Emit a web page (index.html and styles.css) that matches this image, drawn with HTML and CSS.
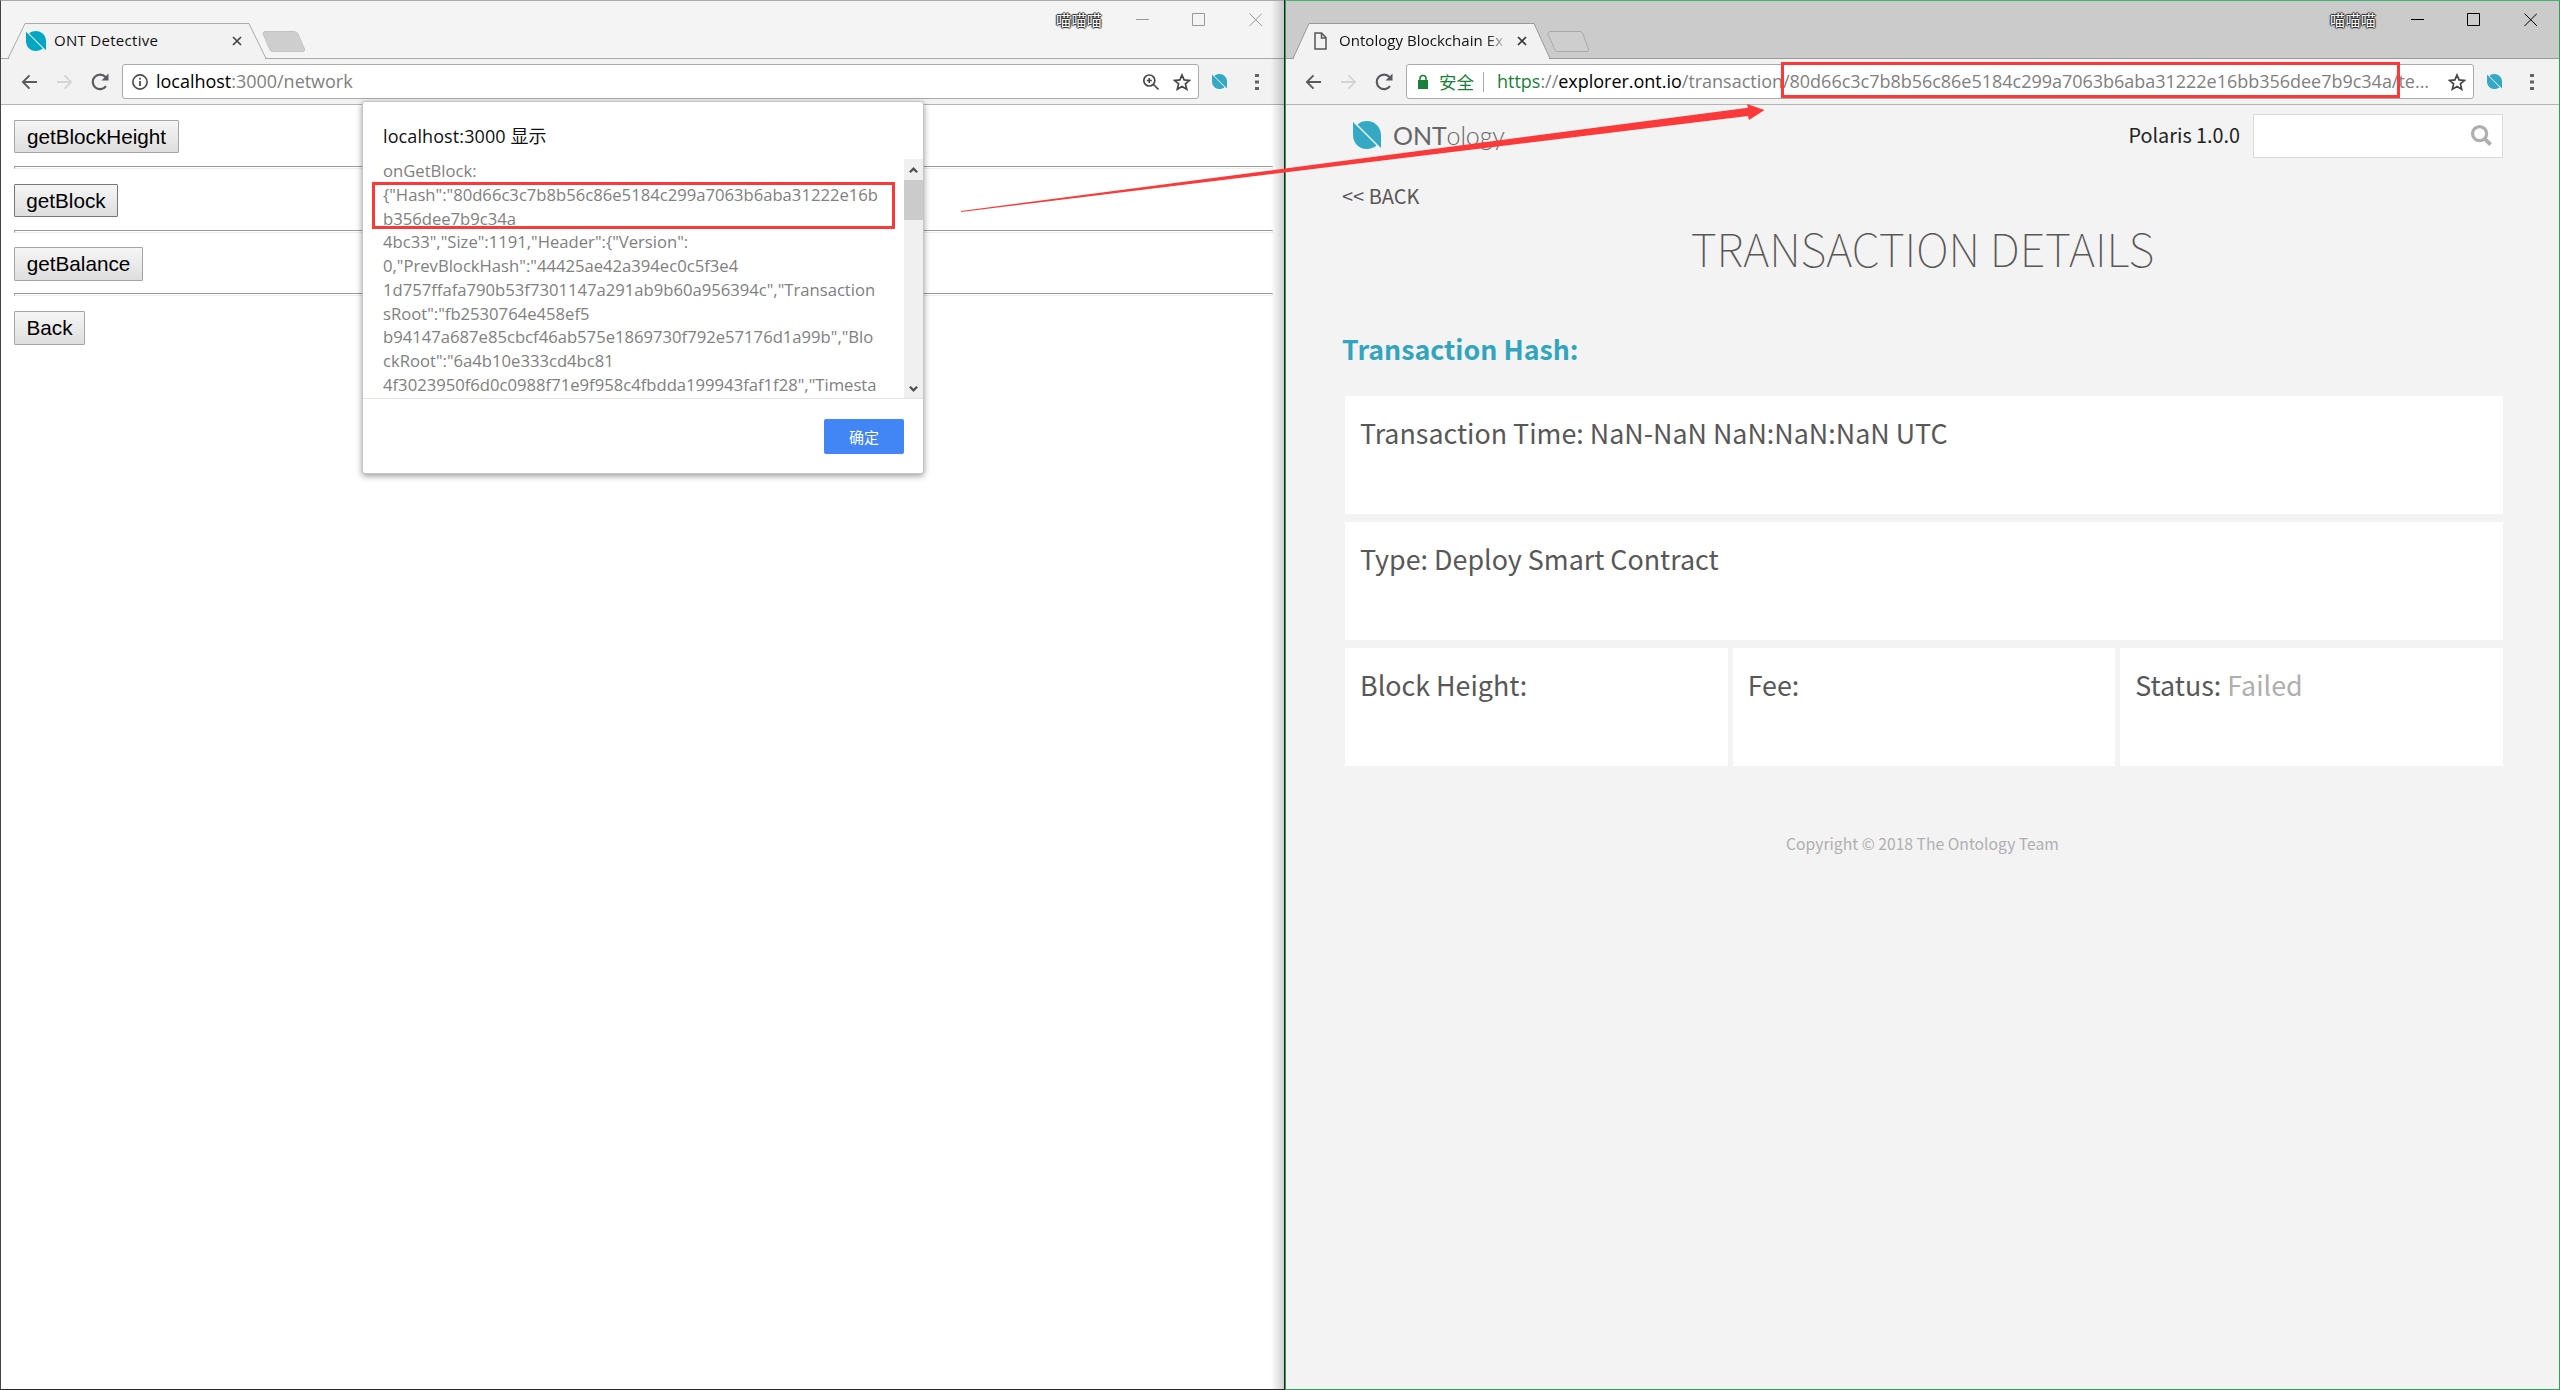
FILE: index.html
```html
<!DOCTYPE html>
<html lang="zh">
<head>
<meta charset="utf-8">
<title>ONT Detective</title>
<link rel="stylesheet" href="styles.css">
</head>
<body>
<svg class="defs" width="0" height="0">
  <symbol id="ont" viewBox="0 0 28 28"><path d="M4.500 3.500C7 1 10.500 0 14 0C21.500 0 28 6 28 14V27zM0 1V14C0 22 6 28 13.500 28C17.500 28 21 26.500 23.500 24.500z"/></symbol>
  <symbol id="back" viewBox="0 0 18 16"><path d="M17 8H2M9 1L2 8l7 7" fill="none" stroke="currentColor" stroke-width="2"/></symbol>
  <symbol id="reload" viewBox="0 0 18 18"><path d="M15 13.200A7.300 7.300 0 1 1 14.500 4" fill="none" stroke="currentColor" stroke-width="2.200"/><path d="M17.500 .5v7h-7z" fill="currentColor"/></symbol>
  <symbol id="star" viewBox="0 0 18 18"><path d="M9 2l2.100 4.900 5.400.5-4.100 3.500 1.300 5.300L9 13.400l-4.700 2.800 1.300-5.300L1.500 7.400l5.400-.5z" fill="none" stroke="#454545" stroke-width="1.700"/></symbol>
  <symbol id="more" viewBox="0 0 4 18"><path d="M0 1h4v3H0zM0 7.500h4v3H0zM0 14h4v3H0z" fill="#5f6368"/></symbol>
  <symbol id="winctl" viewBox="0 0 126 14"><path d="M0 6.500h13M56.500.5h12v12h-12zM113.500.5l12.500 12.500M126 .5l-12.500 12.500" fill="none" stroke="currentColor"/></symbol>
</svg>
<main class="desktop">
  <section class="window window-left">
    <header class="titlebar">
      <div class="tab">
        <svg class="tab-shape" viewBox="0 0 265 36"><path d="M0 35.500H7L24 .5H248L265 35.500z" fill="#f2f2f2" stroke="#aaa"/><path d="M8 35.500H264" stroke="#f2f2f2" stroke-width="1.500"/></svg>
        <svg class="tab-icon"><use href="#ont"/></svg>
        <span class="tab-title">ONT Detective</span>
        <svg class="tab-close" viewBox="0 0 10 10"><path d="M1 1l8 8M9 1L1 9" stroke="#444" stroke-width="1.700"/></svg>
      </div>
      <svg class="new-tab" viewBox="0 0 44 22"><path d="M3 .5H32Q35 .5 36 3L42.500 18Q43 20.500 41 20.500H11Q8.500 20.500 8 19L1 3Q1 .5 3 .5z" fill="#cecece" stroke="#c4c4c4"/></svg>
      <span class="user">喵喵喵</span>
      <svg class="winctl"><use href="#winctl"/></svg>
    </header>
    <nav class="toolbar">
      <svg class="back"><use href="#back"/></svg><svg class="back forward"><use href="#back"/></svg><svg class="reload"><use href="#reload"/></svg>
      <div class="address">
        <svg class="info" viewBox="0 0 16 16"><circle cx="8" cy="8" r="7.100" fill="none" stroke="#4d4d4d" stroke-width="1.700"/><path d="M7.100 3.800h1.800v1.800H7.100zM7.100 7h1.800v5H7.100z" fill="#4d4d4d"/></svg>
        <span class="url url-local"><b>localhost</b>:3000/network</span>
        <svg class="magnifier" viewBox="0 0 16 16"><path d="M11.800 6.500a5.500 5.500 0 1 1-11 0a5.500 5.500 0 0 1 11 0zM10 10l5.500 5.500M3.800 6.500h5M6.300 4v5" fill="none" stroke="#454545" stroke-width="1.700"/></svg>
        <svg class="star"><use href="#star"/></svg>
      </div>
      <svg class="ext"><use href="#ont"/></svg><svg class="more"><use href="#more"/></svg>
    </nav>
    <div class="demo">
      <button class="b1">getBlockHeight</button><hr>
      <button class="b2">getBlock</button><hr class="tight">
      <button class="b3">getBalance</button><hr>
      <button class="b4">Back</button>
    </div>
    <div class="dialog">
      <h2>localhost:3000 显示</h2>
      <div class="message">
        <div class="lines">
          <p>onGetBlock:</p>
          <p>{"Hash":"80d66c3c7b8b56c86e5184c299a7063b6aba31222e16b</p>
          <p>b356dee7b9c34a</p>
          <p>4bc33","Size":1191,"Header":{"Version":</p>
          <p>0,"PrevBlockHash":"44425ae42a394ec0c5f3e4</p>
          <p>1d757ffafa790b53f7301147a291ab9b60a956394c","Transaction</p>
          <p>sRoot":"fb2530764e458ef5</p>
          <p>b94147a687e85cbcf46ab575e1869730f792e57176d1a99b","Blo</p>
          <p>ckRoot":"6a4b10e333cd4bc81</p>
          <p>4f3023950f6d0c0988f71e9f958c4fbdda199943faf1f28","Timesta</p>
        </div>
        <div class="scroll">
          <svg viewBox="0 0 10 8"><path d="M1 6.500l4-4 4 4" fill="none" stroke="#505050" stroke-width="2.500"/></svg>
          <i></i>
          <svg viewBox="0 0 10 8"><path d="M1 1.500l4 4 4-4" fill="none" stroke="#505050" stroke-width="2.500"/></svg>
        </div>
      </div>
      <div class="actions"><button class="ok">确定</button></div>
    </div>
  </section>
  <section class="window window-right">
    <header class="titlebar">
      <div class="tab">
        <svg class="tab-shape" viewBox="0 0 265 36"><path d="M0 35.500H7L23 .5H248L264 35.500z" fill="#f2f2f2" stroke="#999"/><path d="M8 35.500H263" stroke="#f2f2f2" stroke-width="1.500"/></svg>
        <svg class="page-icon" viewBox="0 0 13 18"><path d="M1 1h6.500l4.500 4.500V17H1zM7.500 1v5H12" fill="none" stroke="#555" stroke-width="1.500"/></svg>
        <span class="tab-title fade">Ontology Blockchain Ex</span>
        <svg class="tab-close" viewBox="0 0 10 10"><path d="M1 1l8 8M9 1L1 9" stroke="#333" stroke-width="1.700"/></svg>
      </div>
      <svg class="new-tab" viewBox="0 0 44 22"><path d="M3 .5H33Q35 .5 36 3L41.500 18Q42 20.500 40 20.500H11Q8.500 20.500 8 19L1 3Q1 .5 3 .5z" fill="#cecece" stroke="#aaa"/></svg>
      <span class="user">喵喵喵</span>
      <svg class="winctl"><use href="#winctl"/></svg>
    </header>
    <nav class="toolbar">
      <svg class="back"><use href="#back"/></svg><svg class="back forward"><use href="#back"/></svg><svg class="reload"><use href="#reload"/></svg>
      <div class="address">
        <svg class="lock" viewBox="0 0 10 14"><path d="M0 5h10v9H0z" fill="#188038"/><path d="M2 6V3.500a3 3 0 0 1 6 0V6" fill="none" stroke="#188038" stroke-width="1.500"/></svg>
        <span class="secure">安全</span>
        <span class="url"><em>https</em>://<b>explorer.ont.io</b>/transaction/80d66c3c7b8b56c86e5184c299a7063b6aba31222e16bb356dee7b9c34a/te...</span>
        <svg class="star"><use href="#star"/></svg>
      </div>
      <svg class="ext"><use href="#ont"/></svg><svg class="more"><use href="#more"/></svg>
    </nav>
    <div class="explorer">
      <div class="top">
        <svg class="logo"><use href="#ont"/></svg>
        <span class="brand"><b>ONT</b>ology</span>
        <span class="version">Polaris 1.0.0</span>
        <div class="search"><svg viewBox="0 0 22 22"><circle cx="9" cy="9" r="7.400" fill="none" stroke="#afafaf" stroke-width="3.400"/><path d="M14 14l6.500 6.500" stroke="#afafaf" stroke-width="4"/></svg></div>
      </div>
      <a class="back-link">&lt;&lt; BACK</a>
      <h1>TRANSACTION DETAILS</h1>
      <h3>Transaction Hash:</h3>
      <div class="cards">
        <div class="card wide">Transaction Time: NaN-NaN NaN:NaN:NaN UTC</div>
        <div class="card wide">Type: Deploy Smart Contract</div>
        <div class="card">Block Height:</div>
        <div class="card">Fee:</div>
        <div class="card">Status: <i>Failed</i></div>
      </div>
      <footer>Copyright © 2018 The Ontology Team</footer>
    </div>
  </section>
  <div class="mark mark-hash"></div>
  <div class="mark mark-url"></div>
  <svg class="arrow" viewBox="0 0 2560 1390"><path d="M961 211L1748 107.700L1747 104L1764.500 110L1749 120L1748 116L961 212z" fill="#fc3939"/></svg>
</main>
</body>
</html>
```
FILE: styles.css
```css
* { box-sizing: border-box; }
body { margin: 0; }
.defs { position: absolute; }
.desktop { position: relative; display: flex; width: 2560px; height: 1390px; overflow: hidden; font-family: "Open Sans", "Noto Sans CJK SC", sans-serif; }
.window { position: relative; height: 1390px; flex: none; }
.window-left { width: 1285px; background: #fff; border-left: 1px solid #444; border-top: 1px solid #aaa; border-bottom: 1px solid #2b2628; }
.window-left::after { content: ""; position: absolute; top: 0; right: 0; bottom: 0; width: 14px; background: linear-gradient(90deg, transparent, rgba(0,0,0,.2)); }
.window-right { width: 1275px; background: #f3f3f3; border: 1px solid #2aa35a; border-top-color: #44b374; box-shadow: -1px 0 #222; }
svg { display: block; flex: none; overflow: visible; }
.titlebar { display: flex; height: 58px; background: #f4f4f4; border-bottom: 1px solid #aaa; padding-top: 22px; }
.window-right .titlebar { background: #cbcbcb; border-color: #999; }
.tab { position: relative; width: 265px; height: 36px; display: flex; align-items: center; padding-left: 25px; }
.window-right .tab { padding-left: 28px; }
.tab-shape { position: absolute; left: 0; top: 0; width: 100%; height: 36px; }
.tab-icon, .page-icon, .tab-title, .tab-close { position: relative; }
.tab-icon { width: 20px; height: 20px; fill: #00a6c2; }
.page-icon { width: 13px; height: 18px; }
.tab-title { margin: 0 0 3px 8px; width: 178px; font-size: 15px; line-height: 20px; white-space: nowrap; color: #111; letter-spacing: .3px; }
.window-right .tab-title { margin-left: 12px; letter-spacing: .05px; }
.fade { background: linear-gradient(90deg, #111 83%, transparent 95%); -webkit-background-clip: text; background-clip: text; color: transparent !important; }
.tab-close { width: 10px; height: 10px; }
.new-tab { width: 44px; height: 22px; margin: 8px 0 0 -4px; }
.user { margin: -13px 0 0 auto; font-size: 15px; line-height: 20px; height: 20px; color: #fff; text-shadow: 1px 0 1px #222, -1px 0 1px #222, 0 1px 1px #222, 0 -1px 1px #222; letter-spacing: .3px; }
.winctl { width: 126px; height: 14px; margin: -10px 23px 0 34px; color: #999; }
.window-right .winctl { color: #000; margin-right: 22px; margin-left: 35px; }
.toolbar { display: flex; align-items: center; height: 46px; padding: 0 26px 0 20px; background: #f2f2f2; border-bottom: 1px solid #b4b4b4; color: #5a5a5e; }
.window-right .toolbar { padding: 0 25px 0 19px; }
.back { width: 17px; height: 16px; }
.forward { transform: scaleX(-1); margin-left: 18px; color: #d5d5d5; }
.reload { width: 18px; height: 18px; margin-left: 18px; }
.address { flex: 1; display: flex; align-items: center; margin: 0 13px 0 13px; height: 35px; border: 1px solid #aaa; border-radius: 3px; background: #fff; padding: 0 7px 0 9px; }
.info { width: 16px; height: 16px; }
.url { flex: 1; margin: 0 0 1px 8px; font-size: 18px; line-height: 25px; color: #808080; white-space: nowrap; letter-spacing: -.02px; }
.url b { color: #000; font-weight: 400; }
.url em { color: #188038; font-style: normal; }
.magnifier { width: 16px; height: 16px; margin-right: 14px; }
.star { width: 18px; height: 18px; }
.ext { width: 15px; height: 15px; fill: #35a8c3; }
.more { width: 4px; height: 18px; margin-left: 28px; }
.lock { width: 10px; height: 14px; margin-left: 2px; }
.secure { color: #188038; font-size: 17.500px; line-height: 24px; margin-left: 11px; padding-right: 9px; border-right: 1px solid #aaa; height: 20px; display: flex; align-items: center; }
.secure + .url { margin-left: 13px; }
.demo { padding: 15px 12px 0 13px; display: flex; flex-direction: column; align-items: flex-start; }
.demo button { height: 33px; font: 20.700px "Liberation Sans", Arial, sans-serif; border: 1px solid #a5a5a5; border-radius: 1px; background: linear-gradient(#f6f6f6, #dedede); padding: 0; color: #000; text-align: center; margin-bottom: 13px; }
.demo hr { align-self: stretch; height: 3px; border: 1px solid #9a9a9a; border-color: #9a9a9a #eee #eee #9a9a9a; margin: 0 0 15px; }
.demo .tight { margin-bottom: 14px; }
.demo .b1 { width: 165px; }
.demo .b2 { width: 104px; border-color: #777; }
.demo .b3 { width: 129px; height: 34px; margin-bottom: 12px; }
.demo .b4 { width: 71px; height: 34px; }
.dialog { position: absolute; left: 361px; top: 100px; width: 562px; height: 373px; background: #fff; border: 1px solid #c4c4c4; border-radius: 3px; box-shadow: 0 2px 6px rgba(0,0,0,.4); }
.dialog h2 { margin: 21px 0 10px 20px; font-size: 18px; line-height: 26px; font-weight: 400; color: #111; letter-spacing: .1px; }
.message { display: flex; justify-content: space-between; height: 240px; border-bottom: 1px solid #e3e3e3; overflow: hidden; }
.lines { padding: 0 0 0 20px; }
.lines p { margin: 0; height: 23.780px; line-height: 23.780px; font-size: 16.650px; color: #808080; white-space: nowrap; }
.scroll { width: 19px; background: #f0f0f0; display: flex; flex-direction: column; align-items: center; padding: 7px 0 5px; }
.scroll svg { width: 9px; height: 8px; }
.scroll i { width: 19px; height: 40px; margin: 6px 0 auto; background: #cbcbcb; }
.actions { display: flex; justify-content: flex-end; padding: 20px 19px; }
.ok { width: 80px; height: 35px; border: 0; border-radius: 2px; background: #4285f4; color: #fff; font: 15px "Noto Sans CJK SC", sans-serif; }
.explorer { font-family: "Noto Sans CJK SC", sans-serif; padding: 9px 56px 0; color: #595757; }
.top { display: flex; align-items: center; height: 44px; padding-left: 11px; }
.logo { width: 28px; height: 28px; fill: #35a8c3; margin-top: -2px; }
.brand { margin: -3px 0 0 12px; font: 300 25px/30px Lato, sans-serif; color: #666; letter-spacing: -.1px; }
.brand b { font-weight: 400; }
.version { margin: -3px 13px 0 auto; font-size: 19.800px; line-height: 30px; color: #222; }
.search { width: 250px; height: 44px; background: #fff; border: 1px solid #d9d9d9; display: flex; align-items: center; justify-content: flex-end; padding: 0 10px 2px; }
.search svg { width: 21px; height: 21px; }
.back-link { display: block; margin-top: 23px; font-size: 20px; line-height: 30px; }
.explorer h1 { margin: -3px 0 0; text-align: center; font-weight: 100; font-size: 45.200px; line-height: 80px; }
.explorer h3 { margin: 39px 0 0; font-size: 26.750px; line-height: 44px; color: #32a4be; }
.cards { display: grid; grid-template-columns: repeat(3, 1fr); gap: 8px 5px; margin: 25px 0 0 3px; }
.card { height: 118px; background: #fff; padding: 16px 15px; font-size: 26.850px; line-height: 42px; white-space: nowrap; }
.wide { grid-column: 1 / -1; }
.card i { font-style: normal; color: #afafaf; }
footer { margin-top: 66px; text-align: center; font-size: 15.700px; line-height: 24px; color: #afafaf; }
.mark { position: absolute; border: 3px solid #fc3939; }
.mark-hash { left: 372px; top: 182px; width: 523px; height: 47px; }
.mark-url { left: 1781px; top: 62px; width: 619px; height: 36px; }
.arrow { position: absolute; left: 0; top: 0; width: 2560px; height: 1390px; }
```
